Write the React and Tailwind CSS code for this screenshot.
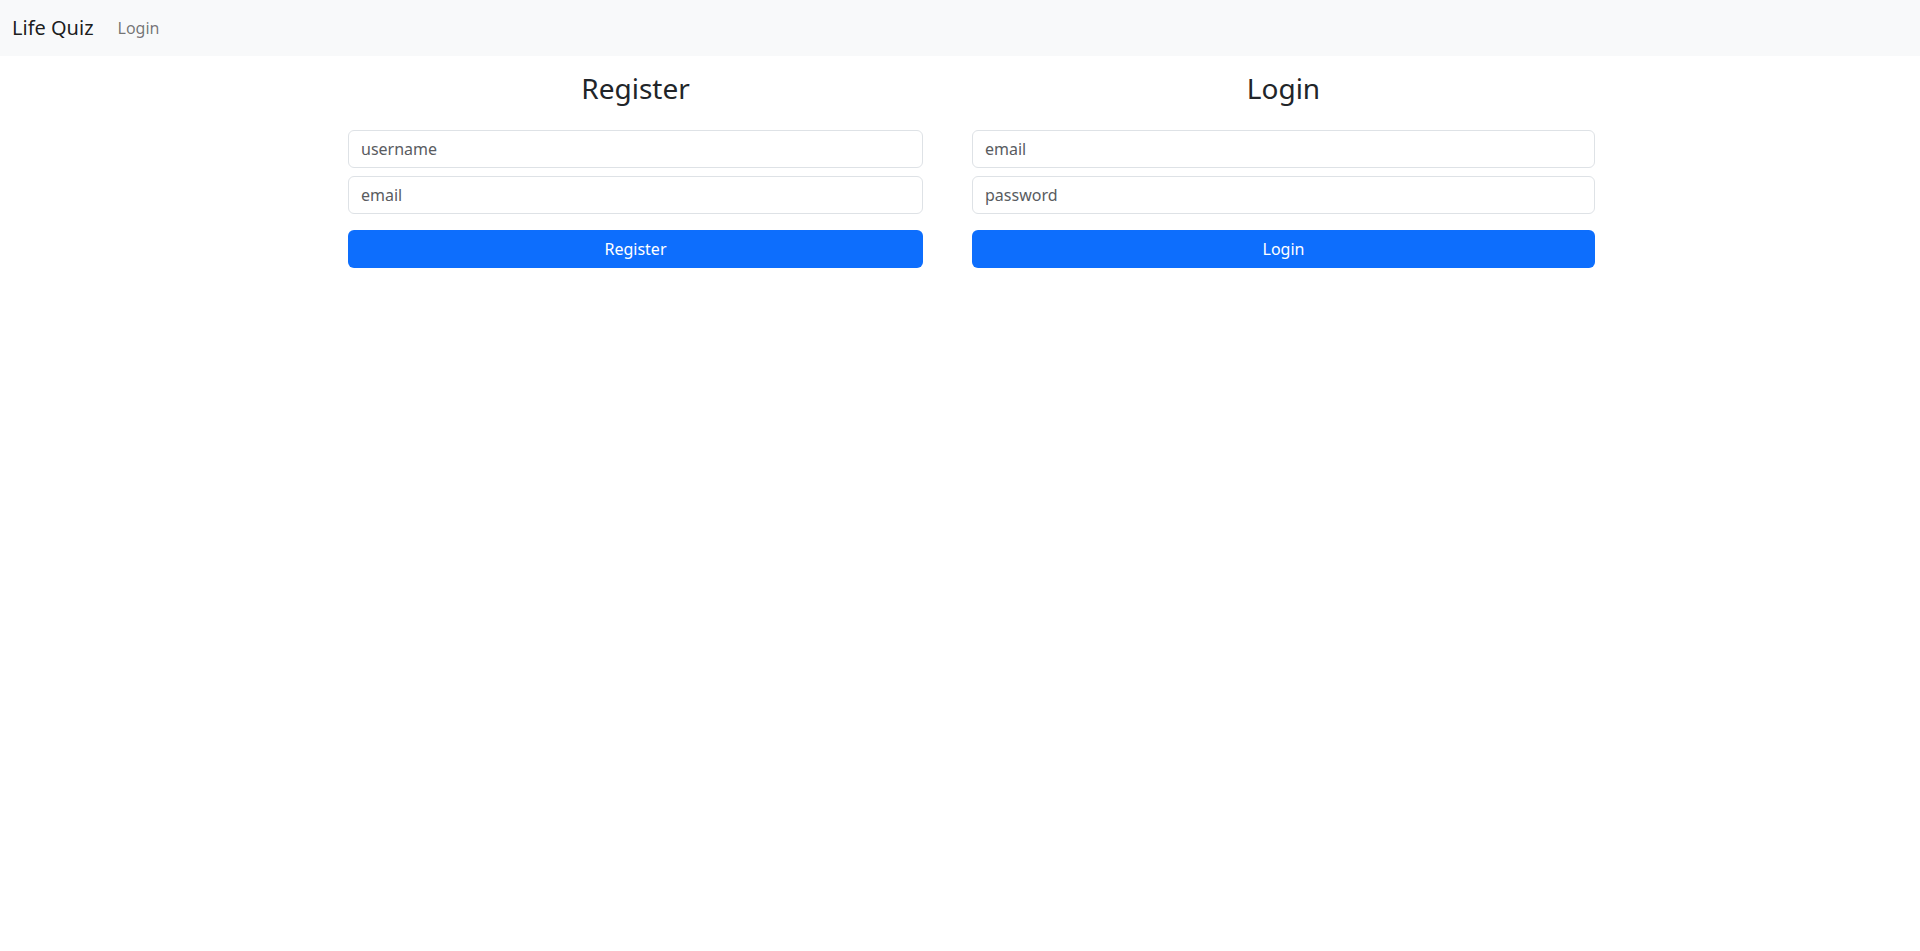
export default function App() {
  return (
    <div className="min-h-screen bg-white text-[#212529] font-['Noto_Sans',sans-serif] text-base">
      {/* Top navbar */}
      <nav className="h-14 bg-[#f8f9fa] flex items-center px-3">
        <a href="#" className="text-[20px] leading-[30px] text-black/90 mr-4">Life Quiz</a>
        <a href="#" className="px-2 text-base leading-6 text-black/55">Login</a>
      </nav>

      {/* Forms */}
      <div className="flex items-start pl-[348px] pt-4">
        <div className="w-[575px] flex flex-col">
          <h3 className="text-[28px] leading-[1.2] font-normal text-center mb-6">Register</h3>
          <input
            placeholder="username"
            className="h-[38px] px-3 border border-[#dee2e6] rounded-md text-base placeholder:text-[#595c5f] mb-2 outline-none"
          />
          <input
            placeholder="email"
            className="h-[38px] px-3 border border-[#dee2e6] rounded-md text-base placeholder:text-[#595c5f] mb-4 outline-none"
          />
          <button className="h-[38px] rounded-md bg-[#0d6efd] text-white text-base">Register</button>
        </div>

        <div className="w-[623px] ml-[49px] flex flex-col">
          <h3 className="text-[28px] leading-[1.2] font-normal text-center mb-6">Login</h3>
          <input
            placeholder="email"
            className="h-[38px] px-3 border border-[#dee2e6] rounded-md text-base placeholder:text-[#595c5f] mb-2 outline-none"
          />
          <input
            type="password"
            placeholder="password"
            className="h-[38px] px-3 border border-[#dee2e6] rounded-md text-base placeholder:text-[#595c5f] mb-4 outline-none"
          />
          <button className="h-[38px] rounded-md bg-[#0d6efd] text-white text-base">Login</button>
        </div>
      </div>
    </div>
  );
}
